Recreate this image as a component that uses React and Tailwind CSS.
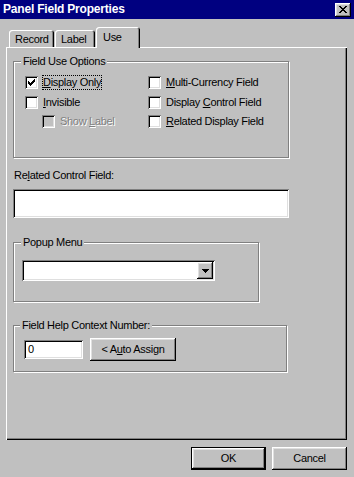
import React from 'react';

const raised =
  'shadow-[inset_-1px_-1px_0_#000,inset_1px_1px_0_#fff,inset_-2px_-2px_0_#808080,inset_2px_2px_0_#dfdfdf]';
const sunken =
  'shadow-[inset_1px_1px_0_#808080,inset_-1px_-1px_0_#fff,inset_2px_2px_0_#000,inset_-2px_-2px_0_#dfdfdf]';
const etched = 'border border-[#808080] shadow-[inset_1px_1px_0_#fff,1px_1px_0_#fff]';

function Check() {
  const rows = [
    [6, 1], [5, 2], [0, 1], [4, 3], [0, 2], [3, 3], [0, 5], [1, 3], [2, 1],
  ];
  const ys = [0, 1, 2, 2, 3, 3, 4, 5, 6];
  return (
    <svg width="7" height="7" viewBox="0 0 7 7" shapeRendering="crispEdges">
      {rows.map(([x, w], i) => (
        <rect key={i} x={x} y={ys[i]} width={w} height="1" fill="#000" />
      ))}
    </svg>
  );
}

function Checkbox({ checked, disabled }) {
  return (
    <div
      className={`w-[13px] h-[13px] shrink-0 flex items-center justify-center ${sunken} ${
        disabled ? 'bg-[#c0c0c0]' : 'bg-white'
      }`}
    >
      {checked && <Check />}
    </div>
  );
}

function CheckRow({ children, checked, disabled, focused, className = '' }) {
  return (
    <div className={`flex items-center h-[13px] ${className}`}>
      <Checkbox checked={checked} disabled={disabled} />
      <span
        className={`ml-[5px] whitespace-nowrap ${
          disabled ? 'text-[#808080] [text-shadow:1px_1px_0_#fff]' : ''
        } ${focused ? 'outline-1 outline-dotted outline-black' : ''}`}
      >
        {children}
      </span>
    </div>
  );
}

function Group({ label, className = '', labelLeft = 'left-[7px]', children }) {
  return (
    <div className={`relative ${etched} ${className}`}>
      <span className={`absolute -top-[7px] ${labelLeft} px-[2px] bg-[#c0c0c0] leading-[13px] whitespace-nowrap`}>
        {label}
      </span>
      {children}
    </div>
  );
}

function Tab({ label, active, className = '' }) {
  return (
    <div
      className={`rounded-t-[3px] pl-[6px] bg-[#c0c0c0] shadow-[inset_1px_1px_0_#fff,inset_-1px_0_0_#000,inset_-2px_0_0_#808080] ${
        active ? 'h-[21px] -mb-[1px] relative z-10 pt-[3px] leading-[14px]' : 'h-[17px] leading-[18px]'
      } ${className}`}
    >
      {label}
    </div>
  );
}

export default function App() {
  return (
    <div className="w-[354px] h-[477px] bg-[#c0c0c0] overflow-hidden font-['Liberation_Sans',Arial,sans-serif] text-[11px] tracking-[-0.3px] text-black leading-[13px]">
      <div className="h-[19px] bg-[#000080] flex items-center justify-between pl-[3px] pr-[3px]">
        <span className="text-white font-bold text-[12px] tracking-[-0.2px]">Panel Field Properties</span>
        <div className={`w-[16px] h-[14px] bg-[#c0c0c0] flex items-center justify-center ${raised}`}>
          <svg width="8" height="7" viewBox="0 0 8 7" shapeRendering="crispEdges">
            <path d="M0 0h2v1H0zM6 0h2v1H6zM1 1h2v1H1zM5 1h2v1H5zM2 2h4v1H2zM3 3h2v1H3zM2 4h4v1H2zM1 5h2v1H1zM5 5h2v1H5zM0 6h2v1H0zM6 6h2v1H6z" fill="#000" />
          </svg>
        </div>
      </div>

      <div className="h-[28px] flex items-end pl-[9px]">
        <Tab label="Record" className="w-[45px]" />
        <Tab label="Label" className="w-[40px] ml-[1px]" />
        <Tab label="Use" active className="w-[44px] ml-[1px] pl-[7px]" />
      </div>

      <div className="ml-[6px] w-[341px] h-[393px] pl-[7px] pt-[14px] shadow-[inset_1px_1px_0_#fff,inset_-1px_-1px_0_#000,inset_-2px_-2px_0_#808080]">
        <Group label="Field Use Options" className="w-[276px] h-[97px]">
          <div className="flex pl-[11px] pt-[14px]">
            <div className="w-[123px] flex flex-col">
              <CheckRow checked focused>
                <u>D</u>isplay Only
              </CheckRow>
              <CheckRow className="mt-[7px]">
                <u>I</u>nvisible
              </CheckRow>
              <CheckRow disabled className="mt-[6px] ml-[17px]">
                Show <u>L</u>abel
              </CheckRow>
            </div>
            <div className="flex flex-col">
              <CheckRow>
                <u>M</u>ulti-Currency Field
              </CheckRow>
              <CheckRow className="mt-[7px]">
                Display <u>C</u>ontrol Field
              </CheckRow>
              <CheckRow className="mt-[6px]">
                <u>R</u>elated Display Field
              </CheckRow>
            </div>
          </div>
        </Group>

        <div className="mt-[11px] ml-[1px] h-[13px]">
          Re<u>l</u>ated Control Field:
        </div>
        <div className={`mt-[7px] w-[276px] h-[29px] bg-white ${sunken}`} />

        <Group label="Popup Menu" className="mt-[24px] w-[246px] h-[60px]">
          <div className="pl-[8px] pt-[17px]">
            <div className={`w-[193px] h-[21px] bg-white p-[2px] flex justify-end ${sunken}`}>
              <div className={`w-[16px] h-[17px] bg-[#c0c0c0] flex items-center justify-center ${raised}`}>
                <svg width="7" height="4" viewBox="0 0 7 4" shapeRendering="crispEdges">
                  <path d="M0 0h7v1H0zM1 1h5v1H1zM2 2h3v1H2zM3 3h1v1H3z" fill="#000" />
                </svg>
              </div>
            </div>
          </div>
        </Group>

        <Group label="Field Help Context Number:" labelLeft="left-[6px]" className="mt-[23px] w-[274px] h-[47px]">
          <div className="flex items-center pl-[10px] pt-[12px]">
            <div className={`w-[59px] h-[19px] bg-white pl-[4px] flex items-center ${sunken}`}>0</div>
            <div className={`ml-[7px] w-[86px] h-[23px] flex items-center justify-center ${raised}`}>
              &lt; A<u>u</u>to Assign
            </div>
          </div>
        </Group>
      </div>

      <div className="mt-[7px] flex justify-end pr-[7px] gap-[6px]">
        <div className="w-[75px] h-[23px] border border-black">
          <div className={`w-full h-full flex items-center justify-center ${raised}`}>OK</div>
        </div>
        <div className={`w-[75px] h-[23px] flex items-center justify-center ${raised}`}>Cancel</div>
      </div>
    </div>
  );
}
